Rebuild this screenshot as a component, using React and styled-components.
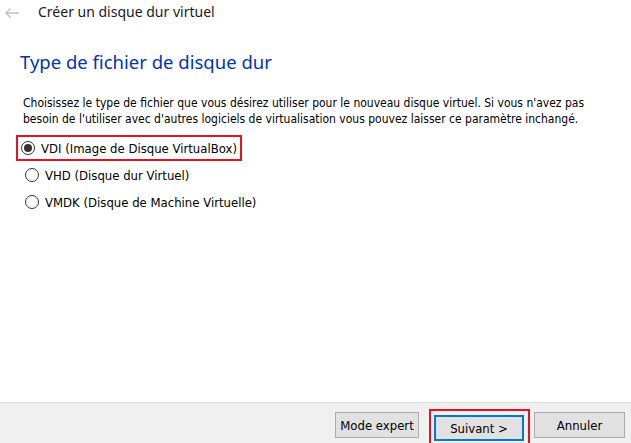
import React from 'react';
import styled, { createGlobalStyle } from 'styled-components';

const GlobalStyle = createGlobalStyle`
    html, body {
        margin: 0;
        padding: 0;
        background: #ffffff;
    }
    body {
        font-family: 'DejaVu Sans', sans-serif;
    }
`;

const options = [
    { id: 'vdi', label: 'VDI (Image de Disque VirtualBox)', checked: true },
    { id: 'vhd', label: 'VHD (Disque dur Virtuel)' },
    { id: 'vmdk', label: 'VMDK (Disque de Machine Virtuelle)' },
];

const BackArrow = () => (
    <svg width="16" height="12" viewBox="0 0 16 12">
        <path d="M15 6H2M6.5 1.5L2 6l4.5 4.5" fill="none" stroke="#c2c2c2" strokeWidth="1.4" />
    </svg>
);

const App = () => {
    return (
        <>
            <GlobalStyle />
            <Window>
                <TitleBar>
                    <BackButton><BackArrow /></BackButton>
                    <TitleText>Créer un disque dur virtuel</TitleText>
                </TitleBar>
                <Content>
                    <Heading>Type de fichier de disque dur</Heading>
                    <Description>
                        Choisissez le type de fichier que vous désirez utiliser pour le nouveau disque virtuel. Si vous n'avez pas besoin de l'utiliser avec d'autres logiciels de virtualisation vous pouvez laisser ce paramètre inchangé.
                    </Description>
                    <RadioList>
                        {options.map(o => (
                            <RadioRow key={o.id} $highlight={o.checked}>
                                <RadioCircle $checked={o.checked} />
                                <RadioLabel>{o.label}</RadioLabel>
                            </RadioRow>
                        ))}
                    </RadioList>
                </Content>
                <Footer>
                    <Button $width="84px">Mode expert</Button>
                    <Highlight>
                        <Button $default $width="90px">Suivant &gt;</Button>
                    </Highlight>
                    <Button $width="91px">Annuler</Button>
                </Footer>
            </Window>
        </>
    );
};
export default App;

const Window = styled.div`
    width: 631px;
    height: 443px;
    display: flex;
    flex-direction: column;
    background: #ffffff;
    overflow: hidden;
`;

const TitleBar = styled.div`
    display: flex;
    align-items: center;
    height: 25px;
    padding-left: 4px;
`;

const BackButton = styled.div`
    width: 34px;
    display: flex;
    align-items: center;
`;

const TitleText = styled.div`
    font-family: 'Noto Sans', sans-serif;
    font-size: 14px;
    color: #1a1a1a;
    margin-top: -3px;
`;

const Content = styled.div`
    flex: 1;
    padding: 0 14px 0 20px;
`;

const Heading = styled.h1`
    margin: 24px 0 0;
    font-family: 'Noto Sans', sans-serif;
    font-weight: normal;
    font-size: 18.5px;
    line-height: 26px;
    color: #0033bc;
`;

const Description = styled.p`
    margin: 20px 0 0 3px;
    font-family: 'DejaVu Sans Condensed', 'DejaVu Sans', sans-serif;
    font-size: 12px;
    line-height: 16px;
    color: #000;
`;

const RadioList = styled.div`
    margin-top: 8px;
    display: flex;
    flex-direction: column;
    gap: 1px;
`;

const RadioRow = styled.div`
    display: flex;
    align-items: center;
    gap: 6px;
    height: 26px;
    width: fit-content;
    padding: 0 3px 0 ${p => (p.$highlight ? '3px' : '5px')};
    margin-left: ${p => (p.$highlight ? '-4px' : '-2px')};
    border: 2px solid ${p => (p.$highlight ? '#e81123' : 'transparent')};
    box-sizing: border-box;
`;

const RadioCircle = styled.span`
    width: 14px;
    height: 14px;
    border-radius: 50%;
    border: 1px solid #333;
    box-sizing: border-box;
    background: #fff;
    display: flex;
    align-items: center;
    justify-content: center;
    &::after {
        content: '';
        width: 8px;
        height: 8px;
        border-radius: 50%;
        background: #333;
        display: ${p => (p.$checked ? 'block' : 'none')};
    }
`;

const RadioLabel = styled.span`
    font-family: 'DejaVu Sans Condensed', 'DejaVu Sans', sans-serif;
    font-size: 13px;
    color: #000;
`;

const Footer = styled.div`
    height: 41px;
    background: #f0f0f0;
    border-top: 1px solid #dfdfdf;
    display: flex;
    align-items: center;
    justify-content: flex-end;
    padding: 4px 6px 0 0;
    box-sizing: border-box;
`;

const Highlight = styled.div`
    border: 2px solid #e81123;
    padding: 4px 4px 3px 3px;
    margin: 0 4px -5px 10px;
`;

const Button = styled.button`
    height: 26px;
    width: ${p => p.$width};
    padding: 0 4px;
    background: #e1e1e1;
    border: 1px solid ${p => (p.$default ? '#0078d7' : '#adadad')};
    box-shadow: ${p => (p.$default ? 'inset 0 0 0 1px #0078d7' : 'none')};
    font-family: 'DejaVu Sans Condensed', 'DejaVu Sans', sans-serif;
    font-size: 13px;
    color: #000;
`;
